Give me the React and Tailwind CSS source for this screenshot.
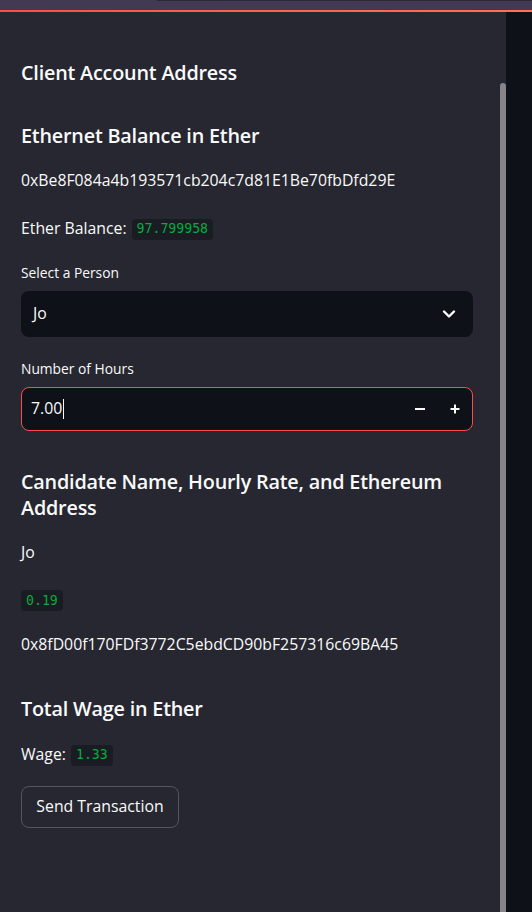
import React from "react";

const sans = { fontFamily: '"Open Sans", "Noto Sans", sans-serif' };

function Code({ children }) {
  return (
    <span
      className="inline-flex h-[21px] items-center rounded-[4px] bg-[#1a1c24] px-[5px] text-[13.2px] text-[#09ab3b]"
      style={{ fontFamily: '"DejaVu Sans Mono", "Liberation Mono", monospace' }}
    >
      {children}
    </span>
  );
}

export default function App() {
  return (
    <div className="flex h-[912px] w-[532px] flex-col overflow-hidden bg-[#0e1117] text-[#fafafa]" style={sans}>
      <div className="flex h-[10px] bg-[#423a52]">
        <div className="w-[157px]" />
        <div className="mt-0 h-[1px] flex-1 bg-[#2c2838]" />
      </div>
      <div className="h-[2px] bg-gradient-to-r from-[#ff4b4b] to-[#ff7354]" />
      <div className="flex flex-1">
        <div className="flex w-[500px] flex-col bg-[#262730] px-[21px]">
          <div className="mt-[45px] flex h-[32px] items-center text-[19.8px] font-semibold tracking-[-0.2px]">
            Client Account Address
          </div>
          <div className="mt-[31px] flex h-[32px] items-center text-[19.8px] font-semibold tracking-[-0.2px]">
            Ethernet Balance in Ether
          </div>
          <div className="mt-[16px] flex h-[26px] items-center text-[15.8px]">
            0xBe8F084a4b193571cb204c7d81E1Be70fbDfd29E
          </div>
          <div className="mt-[22px] flex h-[26px] items-center gap-[5px] text-[15.8px]">
            <span>Ether Balance:</span>
            <Code>97.799958</Code>
          </div>
          <div className="mt-[21px] flex h-[20px] items-center text-[13.8px]">Select a Person</div>
          <div className="mt-[8px] flex h-[46px] w-[452px] items-center justify-between rounded-[8px] bg-[#0e1117] pl-[12px] pr-[17px] text-[15.8px]">
            <span>Jo</span>
            <svg width="14" height="10" viewBox="0 0 14 10" fill="none">
              <path d="M2 2.5 L7 7.5 L12 2.5" stroke="#fafafa" strokeWidth="2.4" strokeLinecap="round" strokeLinejoin="round" />
            </svg>
          </div>
          <div className="mt-[22px] flex h-[20px] items-center text-[13.8px]">Number of Hours</div>
          <div className="mt-[8px] flex h-[44px] w-[452px] items-center rounded-[8px] border border-[#ff4b4b] bg-[#0e1117] pl-[9px] text-[15.8px]">
            <span>7.00</span>
            <span className="ml-[1px] h-[20px] w-[1px] bg-[#fafafa]" />
            <div className="flex-1" />
            <div className="flex h-full w-[35px] items-center justify-center">
              <svg width="12" height="12" viewBox="0 0 12 12">
                <rect x="1" y="5" width="10" height="2" fill="#fafafa" />
              </svg>
            </div>
            <div className="flex h-full w-[35px] items-center justify-center">
              <svg width="12" height="12" viewBox="0 0 12 12">
                <rect x="1.5" y="5" width="9" height="2" fill="#fafafa" />
                <rect x="5" y="1.5" width="2" height="9" fill="#fafafa" />
              </svg>
            </div>
          </div>
          <div className="mt-[38px] text-[19.8px] font-semibold leading-[26px] tracking-[-0.2px]">
            Candidate Name, Hourly Rate, and Ethereum Address
          </div>
          <div className="mt-[19px] flex h-[26px] items-center text-[15.8px]">Jo</div>
          <div className="mt-[24px] flex">
            <Code>0.19</Code>
          </div>
          <div className="mt-[21px] flex h-[26px] items-center text-[15.8px]">
            0x8fD00f170FDf3772C5ebdCD90bF257316c69BA45
          </div>
          <div className="mt-[35px] flex h-[32px] items-center text-[19.8px] font-semibold tracking-[-0.2px]">
            Total Wage in Ether
          </div>
          <div className="mt-[17px] flex h-[26px] items-center gap-[5px] text-[15.8px]">
            <span>Wage:</span>
            <Code>1.33</Code>
          </div>
          <div className="mt-[18px] flex">
            <button className="flex h-[42px] w-[158px] items-center justify-center rounded-[8px] border border-[#55565e] bg-[#262730] text-[15.8px] text-[#fafafa]">
              Send Transaction
            </button>
          </div>
        </div>
        <div className="flex w-[6px] flex-col bg-[#262730]">
          <div className="mt-[71px] flex-1 rounded-t-[3px] bg-[#85858b]" />
        </div>
        <div className="flex-1 bg-[#0e1117]" />
      </div>
    </div>
  );
}
